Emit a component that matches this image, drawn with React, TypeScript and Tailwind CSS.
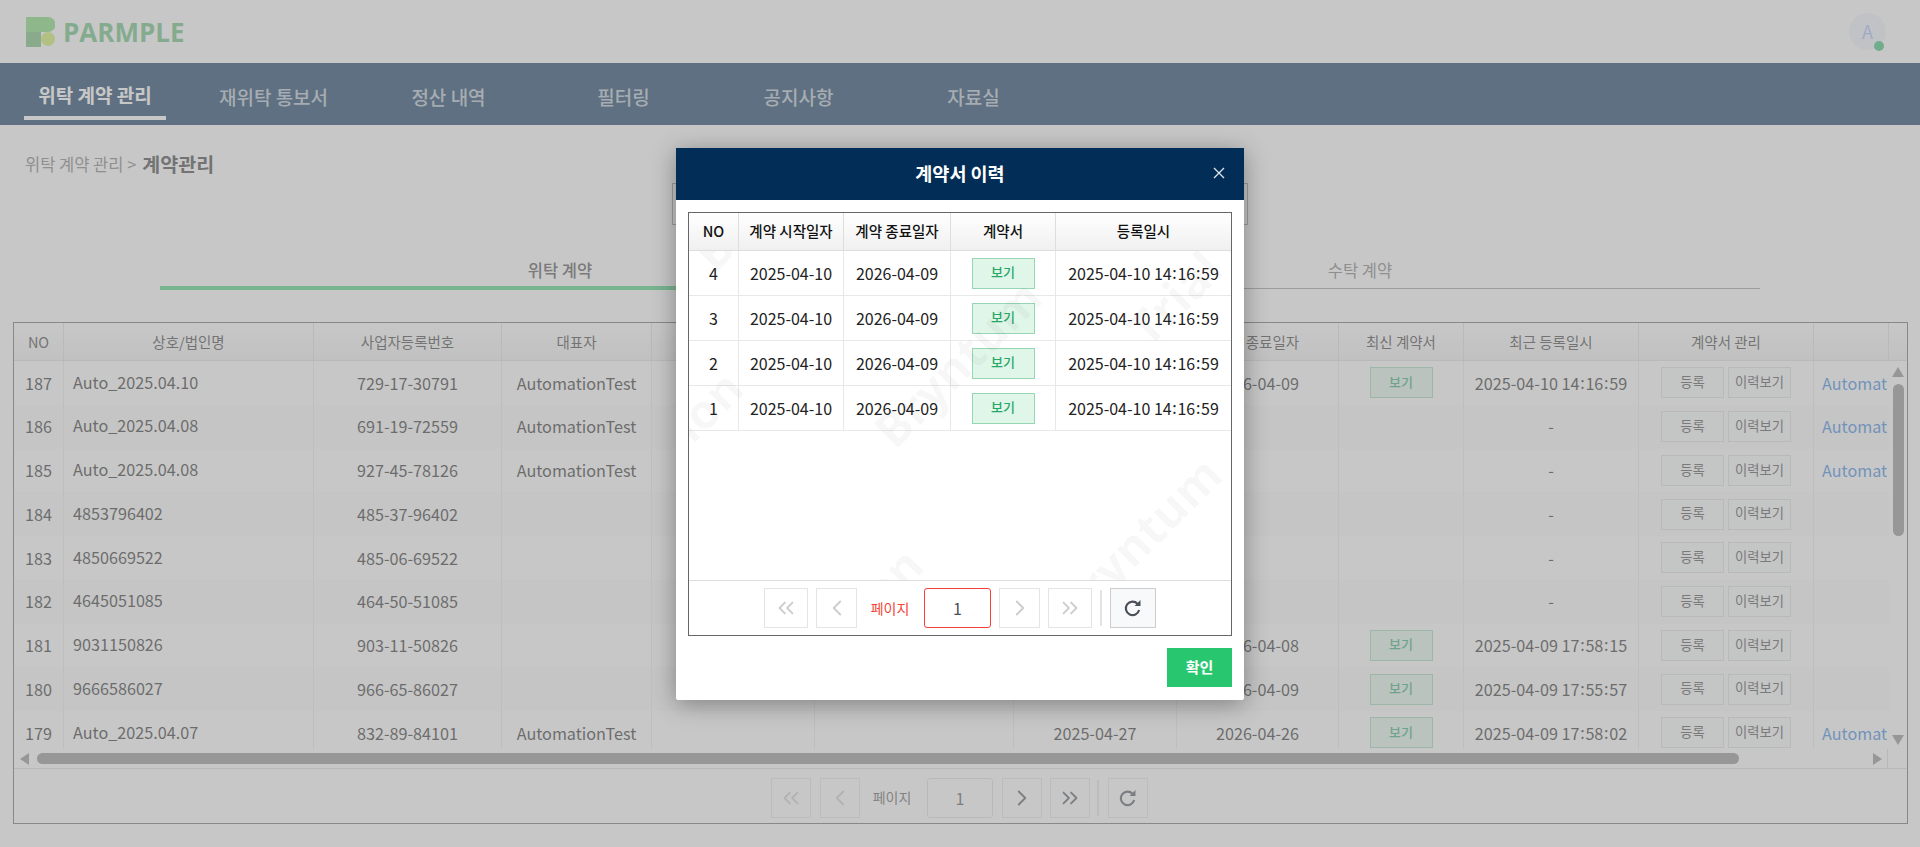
import { ChevronLeft, ChevronRight, ChevronsLeft, ChevronsRight } from "lucide-react";

const navItems = ["재위탁 통보서", "정산 내역", "필터링", "공지사항", "자료실"];

const rows = [
  { no: 187, name: "Auto_2025.04.10", biz: "729-17-30791", ceo: "AutomationTest", start: "2025-04-11", end: "2026-04-09", doc: true, date: "2025-04-10 14:16:59", mail: "AutomationTest" },
  { no: 186, name: "Auto_2025.04.08", biz: "691-19-72559", ceo: "AutomationTest", start: "", end: "", doc: false, date: "-", mail: "AutomationTest" },
  { no: 185, name: "Auto_2025.04.08", biz: "927-45-78126", ceo: "AutomationTest", start: "", end: "", doc: false, date: "-", mail: "AutomationTest" },
  { no: 184, name: "4853796402", biz: "485-37-96402", ceo: "", start: "", end: "", doc: false, date: "-", mail: "" },
  { no: 183, name: "4850669522", biz: "485-06-69522", ceo: "", start: "", end: "", doc: false, date: "-", mail: "" },
  { no: 182, name: "4645051085", biz: "464-50-51085", ceo: "", start: "", end: "", doc: false, date: "-", mail: "" },
  { no: 181, name: "9031150826", biz: "903-11-50826", ceo: "", start: "2025-04-09", end: "2026-04-08", doc: true, date: "2025-04-09 17:58:15", mail: "" },
  { no: 180, name: "9666586027", biz: "966-65-86027", ceo: "", start: "2025-04-10", end: "2026-04-09", doc: true, date: "2025-04-09 17:55:57", mail: "" },
  { no: 179, name: "Auto_2025.04.07", biz: "832-89-84101", ceo: "AutomationTest", start: "2025-04-27", end: "2026-04-26", doc: true, date: "2025-04-09 17:58:02", mail: "AutomationTest" },
];

const historyRows = [4, 3, 2, 1];

const mainCols = "grid grid-cols-[50px_250px_188px_150px_163px_199px_163px_162px_125px_175px_175px_75px]";
const modalCols = "grid grid-cols-[50px_105px_107px_105px_175px]";

// trial watermark is a repeating tile of two diagonal lines
function Watermark({ x, y, color, className = "inset-0" }: { x: number; y: number; color: string; className?: string }) {
  const marks: { text: string; left: number; top: number }[] = [];
  for (let i = -5; i <= 5; i++) {
    for (let j = -8; j <= 8; j++) {
      const px = x + i * 433 + j * 180;
      const py = y - i * 430 + j * 177;
      marks.push({ text: "Bryntum", left: px, top: py - 50 });
      marks.push({ text: "Trial version", left: px + 254, top: py - 102 - 50 });
    }
  }
  return (
    <div className={`absolute overflow-hidden pointer-events-none ${className}`}>
      {marks.map((m, idx) => (
        <span
          key={idx}
          className={`absolute whitespace-nowrap origin-bottom-left -rotate-45 font-['Open_Sans',sans-serif] font-bold text-[48px] leading-[50px] ${color}`}
          style={{ left: m.left, top: m.top }}
        >
          {m.text}
        </span>
      ))}
    </div>
  );
}

// colons sit a little wider and higher in the source font
function DateTime({ value }: { value: string }) {
  const parts = value.split(":");
  return (
    <span className="whitespace-nowrap">
      {parts.map((p, i) => (
        <span key={i}>
          {i > 0 && <span className="inline-block px-[0.7px] -translate-y-[1px]">:</span>}
          {p}
        </span>
      ))}
    </span>
  );
}

function ViewButton() {
  return (
    <button className="w-[63px] h-[31px] bg-[#e0f6e9] border border-[#96d6b2] text-[#28a868] text-[13px] font-medium leading-none pb-[3px]">
      보기
    </button>
  );
}

function GrayButton({ label }: { label: string }) {
  return (
    <button className="w-[63px] h-[31px] bg-[#f8f9fa] border border-[#dcdcdc] text-[#444] text-[13.3px] leading-none pb-[2px]">
      {label}
    </button>
  );
}

function RefreshIcon() {
  return (
    <svg width="20" height="20" viewBox="0 0 16 16">
      <path d="M11.6 4.6A5.4 5.4 0 1 0 12.9 9.6" fill="none" stroke="currentColor" strokeWidth="1.7" />
      <polygon points="14,1.6 14,6.4 9.2,6.4" fill="currentColor" />
    </svg>
  );
}

function PageButton({ w, active, children, className = "" }: { w: string; active?: boolean; children: React.ReactNode; className?: string }) {
  return (
    <button className={`${w} h-[40px] flex items-center justify-center border border-[#e4e4e4] ${active ? "text-[#495057]" : "text-[#cdcdcd]"} ${className}`}>
      {children}
    </button>
  );
}

function Logo() {
  return (
    <div className="flex items-center gap-[8px]">
      <svg width="29" height="30" viewBox="0 0 29 30">
        <path d="M0 0H22a7.5 7.5 0 0 1 0 15H0Z" fill="#74d86e" />
        <rect x="0" y="15" width="15" height="15" fill="#68b86f" />
        <circle cx="22" cy="22" r="7" fill="#cfee5e" />
      </svg>
      <span className="font-['Open_Sans',sans-serif] font-bold text-[26px] leading-none text-[#5cbc76]">PARMPLE</span>
    </div>
  );
}

function Triangle({ dir }: { dir: "up" | "down" | "left" | "right" }) {
  const pts = { up: "6,0 12,10 0,10", down: "0,0 12,0 6,10", left: "9,0 9,12 0,6", right: "0,0 9,6 0,12" }[dir];
  const vertical = dir === "up" || dir === "down";
  return (
    <svg width={vertical ? 12 : 9} height={vertical ? 10 : 12}>
      <polygon points={pts} fill="#8c8c8c" />
    </svg>
  );
}

function MainGrid() {
  return (
    <div className="ml-[13px] mt-[32px] w-[1895px] h-[502px] border border-[#666] flex flex-col">
      <div className="h-[38px] flex border-b border-[#ddd] bg-gradient-to-b from-white to-[#f0f0f0] text-[14.5px] text-[#333] shrink-0">
        <div className={`${mainCols} w-[1875px]`}>
          {["NO", "상호/법인명", "사업자등록번호", "대표자", "계약 상태", "담당자", "계약 시작일자", "계약 종료일자", "최신 계약서", "최근 등록일시", "계약서 관리", ""].map((h, i) => (
            <div key={i} className="flex items-center justify-center border-r border-[#ddd] whitespace-nowrap overflow-hidden">
              {h}
            </div>
          ))}
        </div>
      </div>
      <div className="h-[388px] flex relative overflow-hidden shrink-0">
        <div className="w-[1875px] text-[16.2px] text-[#222]">
          {rows.map((r, i) => (
            <div key={r.no} className={`${mainCols} h-[43.75px] ${i % 2 === 1 ? "bg-[#f9f9f9]" : "bg-white"}`}>
              <div className="flex items-center justify-center border-r border-[#e8e8e8]">{r.no}</div>
              <div className="flex items-center pl-[9px] pb-[2px] border-r border-[#e8e8e8]">{r.name}</div>
              <div className="flex items-center justify-center border-r border-[#e8e8e8]">{r.biz}</div>
              <div className="flex items-center justify-center border-r border-[#e8e8e8]">{r.ceo}</div>
              <div className="border-r border-[#e8e8e8]" />
              <div className="border-r border-[#e8e8e8]" />
              <div className="flex items-center justify-center border-r border-[#e8e8e8]">{r.start}</div>
              <div className="flex items-center justify-center border-r border-[#e8e8e8]">{r.end}</div>
              <div className="flex items-center justify-center border-r border-[#e8e8e8]">{r.doc && <ViewButton />}</div>
              <div className="flex items-center justify-center border-r border-[#e8e8e8]"><DateTime value={r.date} /></div>
              <div className="flex items-center justify-center gap-[4px] border-r border-[#e8e8e8]">
                <GrayButton label="등록" />
                <GrayButton label="이력보기" />
              </div>
              <div className="flex items-center pl-[8px] text-[#2f7fe0]">
                {r.mail && <span className="w-[65px] overflow-hidden whitespace-nowrap">{r.mail}</span>}
              </div>
            </div>
          ))}
        </div>
        <div className="w-[20px] flex flex-col pl-[3px] pt-[6px] pb-[4px]">
          <Triangle dir="up" />
          <div className="w-[11px] h-[152px] mt-[7px] ml-[1px] rounded-full bg-[#8c8c8c]" />
          <div className="mt-auto">
            <Triangle dir="down" />
          </div>
        </div>
        <Watermark x={205} y={193} color="text-black/[.025]" className="top-0 bottom-0 left-0 w-[1000px]" />
        <Watermark x={-227} y={465} color="text-black/[.025]" className="top-0 bottom-0 left-[1230px] right-0" />
      </div>
      <div className="h-[20px] flex items-center border-b border-[#ddd] shrink-0">
        <div className="ml-[6px] flex items-center">
          <Triangle dir="left" />
        </div>
        <div className="ml-[8px] w-[1702px] h-[11px] rounded-full bg-[#8c8c8c]" />
        <div className="ml-[134px] flex items-center">
          <Triangle dir="right" />
        </div>
        <div className="ml-auto w-[20px] h-full border-l border-[#ddd]" />
      </div>
      <div className="flex-1 flex items-center justify-center pt-[3px]">
        <PageButton w="w-[40px]" className="-ml-[2px]"><ChevronsLeft size={26} strokeWidth={1.7} /></PageButton>
        <PageButton w="w-[40px]" className="ml-[9px]"><ChevronLeft size={26} strokeWidth={1.7} /></PageButton>
        <span className="ml-[12px] w-[40px] text-[14px] text-[#555] text-center whitespace-nowrap">페이지</span>
        <div className="ml-[15px] w-[66px] h-[40px] rounded-[3px] border border-[#ddd] flex items-center justify-center text-[16px] text-[#495057]">1</div>
        <PageButton w="w-[40px]" active className="ml-[9px]"><ChevronRight size={26} strokeWidth={1.7} /></PageButton>
        <PageButton w="w-[40px]" active className="ml-[8px]"><ChevronsRight size={26} strokeWidth={1.7} /></PageButton>
        <div className="ml-[7px] w-[2px] h-[36px] bg-[#e4e4e4]" />
        <PageButton w="w-[40px]" active className="ml-[9px]"><RefreshIcon /></PageButton>
      </div>
    </div>
  );
}

function HistoryModal() {
  return (
    <div className="absolute left-[676px] top-[148px] w-[568px] h-[552px] bg-white rounded-b-[2px] shadow-[0_4px_24px_rgba(0,0,0,0.35)] flex flex-col">
      <div className="h-[52px] bg-[#012d56] relative flex items-center justify-center text-white text-[18.5px] font-bold shrink-0">
        계약서 이력
        <svg className="absolute right-[19px] top-[19px]" width="12" height="12" viewBox="0 0 12 12">
          <path d="M1 1L11 11M11 1L1 11" stroke="#dfe6ee" strokeWidth="1.3" />
        </svg>
      </div>
      <div className="mx-[12px] mt-[12px] h-[424px] border border-[#666] flex flex-col shrink-0">
        <div className={`${modalCols} h-[38px] border-b border-[#ddd] bg-gradient-to-b from-white to-[#f0f0f0] text-[14.5px] font-medium text-[#111] shrink-0`}>
          {["NO", "계약 시작일자", "계약 종료일자", "계약서", "등록일시"].map((h, i) => (
            <div key={h} className={`flex items-center justify-center pb-[2px] whitespace-nowrap ${i < 4 ? "border-r border-[#ddd]" : ""}`}>
              {h}
            </div>
          ))}
        </div>
        <div className="relative flex-1 text-[16px] text-[#222]">
          {historyRows.map((n) => (
            <div key={n} className={`${modalCols} h-[45px] border-b border-[#e8e8e8]`}>
              <div className="flex items-center justify-center border-r border-[#e8e8e8]">{n}</div>
              <div className="flex items-center justify-center border-r border-[#e8e8e8]">2025-04-10</div>
              <div className="flex items-center justify-center border-r border-[#e8e8e8]">2026-04-09</div>
              <div className="flex items-center justify-center border-r border-[#e8e8e8]"><ViewButton /></div>
              <div className="flex items-center justify-center"><DateTime value="2025-04-10 14:16:59" /></div>
            </div>
          ))}
          <Watermark x={211} y={205} color="text-black/[.035]" />
        </div>
        <div className="h-[55px] border-t border-[#ddd] flex items-center justify-center shrink-0">
          <PageButton w="w-[44px]"><ChevronsLeft size={26} strokeWidth={1.7} /></PageButton>
          <PageButton w="w-[41px]" className="ml-[8px]"><ChevronLeft size={26} strokeWidth={1.7} /></PageButton>
          <span className="ml-[13px] w-[40px] text-[14px] text-[#f44336] text-center whitespace-nowrap">페이지</span>
          <div className="ml-[14px] w-[67px] h-[40px] rounded-[3px] border border-[#f44336] flex items-center justify-center text-[16px] text-[#495057]">1</div>
          <PageButton w="w-[41px]" className="ml-[8px]"><ChevronRight size={26} strokeWidth={1.7} /></PageButton>
          <PageButton w="w-[44px]" className="ml-[8px]"><ChevronsRight size={26} strokeWidth={1.7} /></PageButton>
          <div className="ml-[8px] w-[2px] h-[36px] bg-[#e4e4e4]" />
          <button className="ml-[8px] w-[46px] h-[40px] flex items-center justify-center bg-[#f8f9fa] border border-[#ccc] text-[#495057]">
            <RefreshIcon />
          </button>
        </div>
      </div>
      <div className="flex justify-end mt-[12px] mr-[12px]">
        <button className="w-[65px] h-[39px] bg-[#28c76f] text-white text-[15px] font-bold">확인</button>
      </div>
    </div>
  );
}

export default function App() {
  return (
    <div className="relative w-full h-[847px] overflow-hidden bg-white font-['Noto_Sans_CJK_KR','Noto_Sans',sans-serif]">
      <header className="h-[63px] flex items-center justify-between pl-[26px] pr-[34px]">
        <Logo />
        <div className="relative w-[37px] h-[37px] rounded-full bg-[#eef3fb] flex items-center justify-center text-[18px] text-[#a0b8ff]">
          A
          <span className="absolute right-[2px] bottom-[-1px] w-[10px] h-[10px] rounded-full bg-[#2fbf71]" />
        </div>
      </header>

      <nav className="h-[62px] bg-[#012d56] flex items-start pl-[24px] text-[19px] font-medium">
        <div className="w-[142px] h-[57px] pt-[11px] flex items-center justify-center border-b-4 border-white text-white font-bold whitespace-nowrap">
          위탁 계약 관리
        </div>
        <div className="ml-[20px] flex">
          {navItems.map((n) => (
            <div key={n} className="w-[175px] h-[57px] pt-[11px] flex items-center justify-center text-white/70 whitespace-nowrap">
              {n}
            </div>
          ))}
        </div>
      </nav>

      <div className="h-[58px] pt-[20px] pl-[25px] flex items-center gap-[6px] text-[16.5px] text-[#777]">
        <span>위탁 계약 관리 &gt;</span>
        <span className="text-[19.5px] font-bold text-[#333]">계약관리</span>
      </div>

      <div className="ml-[672px] w-[576px] h-[42px] border border-[#999]" />

      <div className="mt-[30px] mx-[160px] flex items-start text-[16.5px]">
        <div className="w-[800px] h-[35px] pt-[3px] border-b-4 border-[#3ed17b] flex items-start justify-center font-medium text-[#444]">
          위탁 계약
        </div>
        <div className="w-[800px] h-[34px] pt-[3px] border-b border-[#999] flex items-start justify-center text-[#777]">
          수탁 계약
        </div>
      </div>

      <MainGrid />

      <div className="absolute inset-0 bg-[rgba(160,160,160,0.59)]" />
      <HistoryModal />
    </div>
  );
}
